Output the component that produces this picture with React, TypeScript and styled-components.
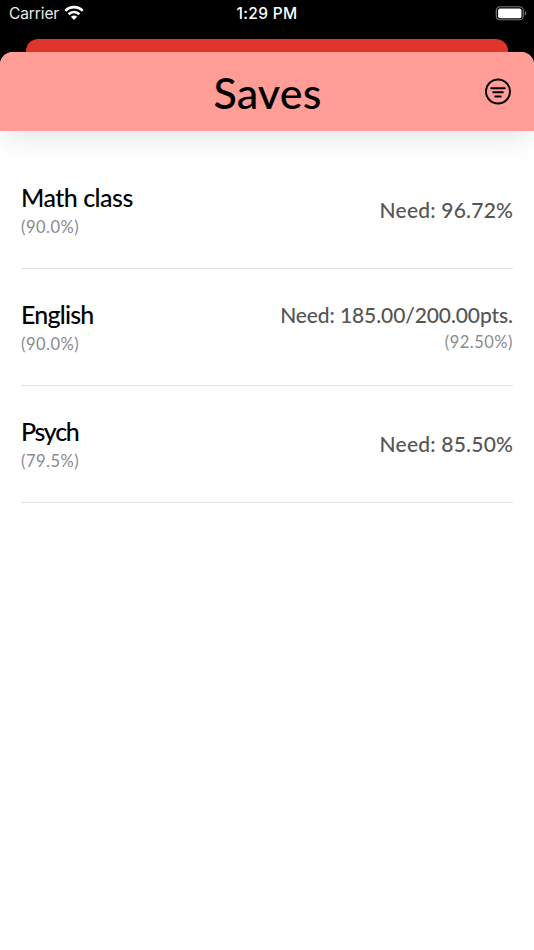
import React from 'react';
import styled, { createGlobalStyle } from 'styled-components';

const GlobalStyle = createGlobalStyle`
  * { box-sizing: border-box; }
  body { margin: 0; background: #000; }
`;

const Screen = styled.div`
  width: 534px;
  height: 950px;
  display: flex;
  flex-direction: column;
  overflow: hidden;
  background: #000;
  font-family: Futura, Lato, sans-serif;
`;

const StatusBar = styled.div`
  height: 39px;
  flex: none;
  display: grid;
  grid-template-columns: 1fr auto 1fr;
  align-items: start;
  padding: 5px 7px 0 9px;
  color: #fff;
  font: 400 15.5px/18px Inter, sans-serif;
`;

const Carrier = styled.div`
  display: flex;
  gap: 5px;
  letter-spacing: -0.1px;
  color: #ececec;
`;

const Clock = styled.div`
  font-weight: 500;
  font-size: 15.5px;
  letter-spacing: 0.35px;
  margin-right: 2px;
`;

const Battery = styled.svg`
  justify-self: end;
  margin-top: 1px;
`;

const BackCard = styled.div`
  flex: none;
  height: 13px;
  margin: 0 26px;
  border-radius: 12px 12px 0 0;
  background: #e0352b;
`;

const Sheet = styled.main`
  flex: 1;
  border-radius: 13px 13px 0 0;
  background: #fff;
  overflow: hidden;
`;

const Header = styled.header`
  height: 79px;
  display: grid;
  grid-template-columns: 1fr auto 1fr;
  padding: 0 22px;
  background: #ff9d96;
  box-shadow: 0 12px 26px -4px rgba(0, 0, 0, 0.1);
`;

const Title = styled.h1<{ $tracking: number }>`
  grid-column: 2;
  margin: 14px 0 0 1px;
  font-size: 43px;
  font-weight: 500;
  line-height: 54px;
  letter-spacing: ${(p) => p.$tracking}px;
  color: #000;
`;

const FilterButton = styled.button`
  justify-self: end;
  align-self: start;
  margin-top: 26px;
  width: 28px;
  height: 28px;
  padding: 0;
  border: 0;
  background: none;

  svg { display: block; }
`;

const List = styled.ul`
  margin: 21px 21px 0;
  padding: 0;
  list-style: none;
`;

const Row = styled.li`
  height: 117px;
  display: flex;
  justify-content: space-between;
  align-items: center;
  border-bottom: 1px solid #e1e1e1;
`;

const Course = styled.div`
  padding-top: 1px;
`;

const Result = styled.div<{ $single: boolean }>`
  text-align: right;
  padding-bottom: ${(p) => (p.$single ? 2 : 0)}px;
`;

const Name = styled.div<{ $tracking: number }>`
  font-size: 25px;
  font-weight: 500;
  line-height: 30px;
  letter-spacing: ${(p) => p.$tracking}px;
  margin-bottom: 1px;
  color: #000;
`;

const Need = styled.div<{ $tracking: number }>`
  font-size: 21px;
  font-weight: 500;
  line-height: 27px;
  letter-spacing: ${(p) => p.$tracking}px;
  margin-right: ${(p) => -p.$tracking}px;
  color: #555;
`;

const Percent = styled.div`
  padding-top: 1px;
  margin-bottom: -1px;
  font-size: 16.5px;
  line-height: 26px;
  letter-spacing: 0.5px;
  color: #8a8a8e;
`;

const saves = [
  { name: 'Math class', nameTracking: -0.5, goal: '(90.0%)', need: 'Need: 96.72%', needTracking: 0.22 },
  { name: 'English', nameTracking: -0.8, goal: '(90.0%)', need: 'Need: 185.00/200.00pts.', needTracking: -0.1, detail: '(92.50%)' },
  { name: 'Psych', nameTracking: -1.3, goal: '(79.5%)', need: 'Need: 85.50%', needTracking: 0.22 },
];

const WifiIcon = () => (
  <svg width="20" height="16" viewBox="0 0 20 16">
    <g fill="none" stroke="#fff" strokeWidth="2.7">
      <path d="M1.3 5.9C6.1.9 13.9.9 18.7 5.9" />
      <path d="M4.6 9.3c3-3.1 7.8-3.1 10.8 0" />
    </g>
    <path d="M10 15 6.9 11.8c1.8-1.7 4.4-1.7 6.2 0z" fill="#fff" />
  </svg>
);

export default function App() {
  return (
    <>
      <GlobalStyle />
      <Screen>
        <StatusBar>
          <Carrier>
            <span>Carrier</span>
            <WifiIcon />
          </Carrier>
          <Clock>1:29 PM</Clock>
          <Battery width="32" height="15" viewBox="0 0 32 15">
            <rect x="1.3" y=".75" width="27" height="13" rx="3.8" fill="none" stroke="#777" strokeWidth="1.2" />
            <rect x="3.1" y="2.4" width="23.4" height="9.8" rx="2" fill="#fff" />
            <path d="M29.9 5v4.7c1.9-.8 1.9-3.9 0-4.7z" fill="#777" />
          </Battery>
        </StatusBar>
        <BackCard />
        <Sheet>
          <Header>
            <Title $tracking={0.2}>Saves</Title>
            <FilterButton aria-label="Filter">
              <svg width="28" height="28" viewBox="0 0 28 28" fill="none" stroke="#000" strokeWidth="2" strokeLinecap="round">
                <circle cx="14" cy="13.5" r="12" />
                <path d="M7.2 10.2h13.6M9.2 14.3h9.6M11.2 18.4h5.6" />
              </svg>
            </FilterButton>
          </Header>
          <List>
            {saves.map((s) => (
              <Row key={s.name}>
                <Course>
                  <Name $tracking={s.nameTracking}>{s.name}</Name>
                  <Percent>{s.goal}</Percent>
                </Course>
                <Result $single={!s.detail}>
                  <Need $tracking={s.needTracking}>{s.need}</Need>
                  {s.detail && <Percent>{s.detail}</Percent>}
                </Result>
              </Row>
            ))}
          </List>
        </Sheet>
      </Screen>
    </>
  );
}
